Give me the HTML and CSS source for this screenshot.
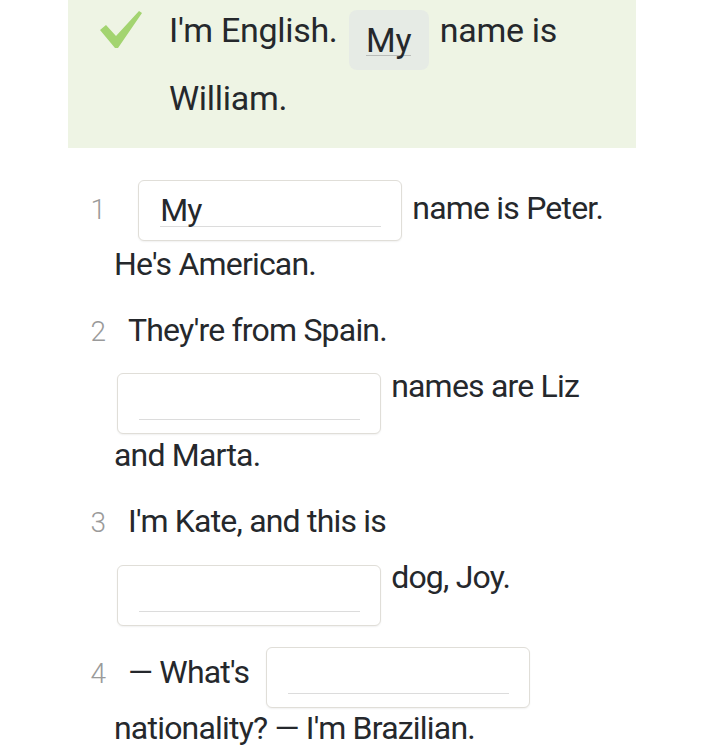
FILE: index.html
```html
<!DOCTYPE html>
<html lang="en">
<head>
  <meta charset="UTF-8">
  <title>Possessive adjectives</title>
  <meta name="viewport" content="width=device-width, initial-scale=1.0">
  <link rel="stylesheet" href="styles.css">
</head>
<body>
  <div class="exercise">

    <div class="example">
      <svg class="tick" width="42" height="38" viewBox="0 0 42 38">
        <polygon points="0,19 6,14 16,25 39,0 42,2 18,37 15,37" fill="#a3d470"/>
      </svg>
      <p class="example-text">
        I'm English. <span class="chip"><span class="chip-word">My</span></span> name is William.
      </p>
    </div>

    <p class="item"><span class="num">1</span> <span class="blank blank-1"><span class="field">My</span></span> name is Peter. He's American.</p>

    <p class="item"><span class="num">2</span>They're from Spain. <span class="blank blank-2"><span class="field"></span></span> names are Liz and Marta.</p>

    <p class="item"><span class="num">3</span>I'm Kate, and this is <span class="blank blank-3"><span class="field"></span></span> dog, Joy.</p>

    <p class="item item-last"><span class="num">4</span>— What's <span class="blank blank-4"><span class="field"></span></span> nationality? — I'm Brazilian.</p>

  </div>
</body>
</html>
```

FILE: styles.css
```css
:root {
  --text: #25282c;
  --muted: #9a9a9a;
  --panel: #eef4e4;
  --chip: #e6ebe5;
  --border: #e0ded8;
}

body {
  margin: 0;
  background: #ffffff;
  color: var(--text);
  font-family: Roboto, 'Liberation Sans', sans-serif;
}

.exercise {
  width: 568px;
  margin-left: 68px;
}

/* worked example */

.example {
  display: flex;
  align-items: flex-start;
  height: 148px;
  padding-left: 32px;
  background: var(--panel);
  box-sizing: border-box;
}

.tick {
  flex: none;
  margin-top: 11px;
}

.example-text {
  margin: -4px 0 0 27px;
  width: 430px;
  font-size: 34px;
  line-height: 68px;
  letter-spacing: -0.3px;
}

.chip {
  display: inline-block;
  width: 80px;
  height: 60px;
  margin: 0 3px -10px;
  background: var(--chip);
  border-radius: 8px;
  text-align: center;
  overflow: hidden;
  vertical-align: -18px;
  line-height: 60px;
}

.chip-word {
  display: inline-block;
  line-height: 30px;
  margin-top: 4px;
  border-bottom: 1px solid #b9bcb9;
}

/* items */

.item {
  margin: 0;
  padding: 0 8px 0 46px;
  text-indent: -24px;
  font-size: 32px;
  line-height: 55px;
  letter-spacing: -0.8px;
}

.example + .item {
  margin-top: 32px;
}

.item + .item {
  margin-top: 11px;
}

.item-last {
  margin-top: 25px !important;
}

.num {
  display: inline-block;
  width: 16px;
  margin-right: 22px;
  text-indent: 0;
  text-align: right;
  color: var(--muted);
  font-size: 28px;
  font-weight: 300;
  letter-spacing: 0;
}

.blank {
  display: inline-block;
  box-sizing: border-box;
  width: 264px;
  height: 61px;
  margin: 0 3px -7px;
  padding: 0 20px 0 21px;
  text-indent: 0;
  background: #fff;
  border: 1px solid var(--border);
  border-radius: 6px;
  box-shadow: 0 1px 2px rgba(0, 0, 0, 0.06);
  overflow: hidden;
}

.field {
  display: block;
  height: 44px;
  margin-top: 1px;
  border-bottom: 1px solid #dcdcdc;
  line-height: 56px;
}

.blank-1 { vertical-align: -15.5px; }
.blank-2 { vertical-align: -31.5px; margin-bottom: -6px; }
.blank-3 { vertical-align: -31.5px; margin-bottom: -6px; }
.blank-4 { vertical-align: -18.5px; margin-left: 10px; }
```
